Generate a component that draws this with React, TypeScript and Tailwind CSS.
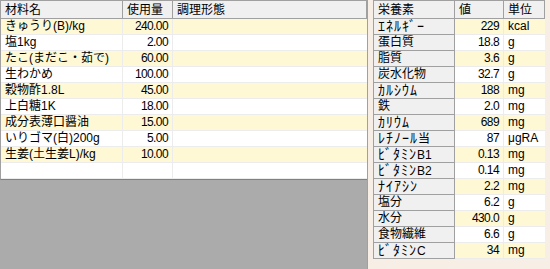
import React from 'react';

const ingredients: [string, string][] = [
    ['きゅうり(B)/kg', '240.00'],
    ['塩1kg', '2.00'],
    ['たこ(まだこ・茹で)', '60.00'],
    ['生わかめ', '100.00'],
    ['穀物酢1.8L', '45.00'],
    ['上白糖1K', '18.00'],
    ['成分表薄口醤油', '15.00'],
    ['いりゴマ(白)200g', '5.00'],
    ['生姜(土生姜L)/kg', '10.00'],
    ['', ''],
];

const nutrients: [string, string, string][] = [
    ['ｴﾈﾙｷﾞｰ', '229', 'kcal'],
    ['蛋白質', '18.8', 'g'],
    ['脂質', '3.6', 'g'],
    ['炭水化物', '32.7', 'g'],
    ['ｶﾙｼｳﾑ', '188', 'mg'],
    ['鉄', '2.0', 'mg'],
    ['ｶﾘｳﾑ', '689', 'mg'],
    ['ﾚﾁﾉｰﾙ当', '87', 'μgRA'],
    ['ﾋﾞﾀﾐﾝB1', '0.13', 'mg'],
    ['ﾋﾞﾀﾐﾝB2', '0.14', 'mg'],
    ['ﾅｲｱｼﾝ', '2.2', 'mg'],
    ['塩分', '6.2', 'g'],
    ['水分', '430.0', 'g'],
    ['食物繊維', '6.6', 'g'],
    ['ﾋﾞﾀﾐﾝC', '34', 'mg'],
];

const headCell = 'h-[18px] bg-[#f0f0f0] border-r border-b border-[#a0a0a0] pl-[4px] leading-[18px] whitespace-nowrap overflow-hidden';

// half-width katakana renders small and tight, so enlarge those runs a bit
const Label = ({ text }: { text: string }) => (
    <>
        {text.split(/([\uFF61-\uFF9F]+)/).map((part, i) =>
            /[\uFF61-\uFF9F]/.test(part)
                ? <span key={i} className="text-[14px] leading-none tracking-[1px]">{part}</span>
                : <span key={i}>{part}</span>
        )}
    </>
);

export default function App() {
    return (
        <div
            className="w-[550px] h-[269px] bg-[#f7efe6] flex text-[12px] text-black overflow-hidden"
            style={{ fontFamily: "'Liberation Sans', 'Noto Sans CJK JP', sans-serif" }}
        >
            {/* ingredient grid */}
            <div className="w-[368px] h-full flex flex-col bg-[#ababab] border-r border-[#a0a0a0]">
                <div className="bg-white border-t border-l border-[#a0a0a0] border-b border-b-[#808080]">
                    <div className="grid grid-cols-[122px_50px_1fr]">
                        <div className={headCell}>材料名</div>
                        <div className={headCell}>使用量</div>
                        <div className={headCell}>調理形態</div>
                    </div>
                    {ingredients.map(([name, qty], i) => (
                        <div
                            key={i}
                            className={`grid grid-cols-[122px_50px_1fr] h-[16px] ${i % 2 === 0 && name ? 'bg-[#fff8d5]' : 'bg-white'}`}
                        >
                            <div className="border-r border-b border-[#ececec] pl-[4px] leading-[15px] whitespace-nowrap overflow-hidden">{name}</div>
                            <div className="border-r border-b border-[#ececec] pr-[4px] text-right leading-[15px] tracking-[-0.6px]">{qty}</div>
                            <div className="border-b border-[#ececec]" />
                        </div>
                    ))}
                </div>
            </div>

            {/* nutrition table */}
            <div className="ml-[5px] w-[172px] self-start border-t border-l border-[#a0a0a0]">
                <div className="grid grid-cols-[81px_49px_41px]">
                    <div className={headCell}>栄養素</div>
                    <div className={headCell}>値</div>
                    <div className={headCell}>単位</div>
                </div>
                {nutrients.map(([name, val, unit], i) => (
                    <div key={i} className="grid grid-cols-[81px_49px_41px] h-[16px]">
                        <div className="bg-[#f0f0f0] border-r border-b border-[#a0a0a0] pl-[4px] leading-[15px] whitespace-nowrap overflow-hidden">
                            <Label text={name} />
                        </div>
                        <div className={`border-r border-b border-[#ececec] pr-[4px] text-right leading-[15px] tracking-[-0.6px] ${i % 2 === 0 ? 'bg-[#fff8d5]' : 'bg-white'}`}>{val}</div>
                        <div className={`border-b border-[#ececec] pl-[4px] leading-[15px] ${i % 2 === 0 ? 'bg-[#fff8d5]' : 'bg-white'}`}>{unit}</div>
                    </div>
                ))}
            </div>
        </div>
    );
}
